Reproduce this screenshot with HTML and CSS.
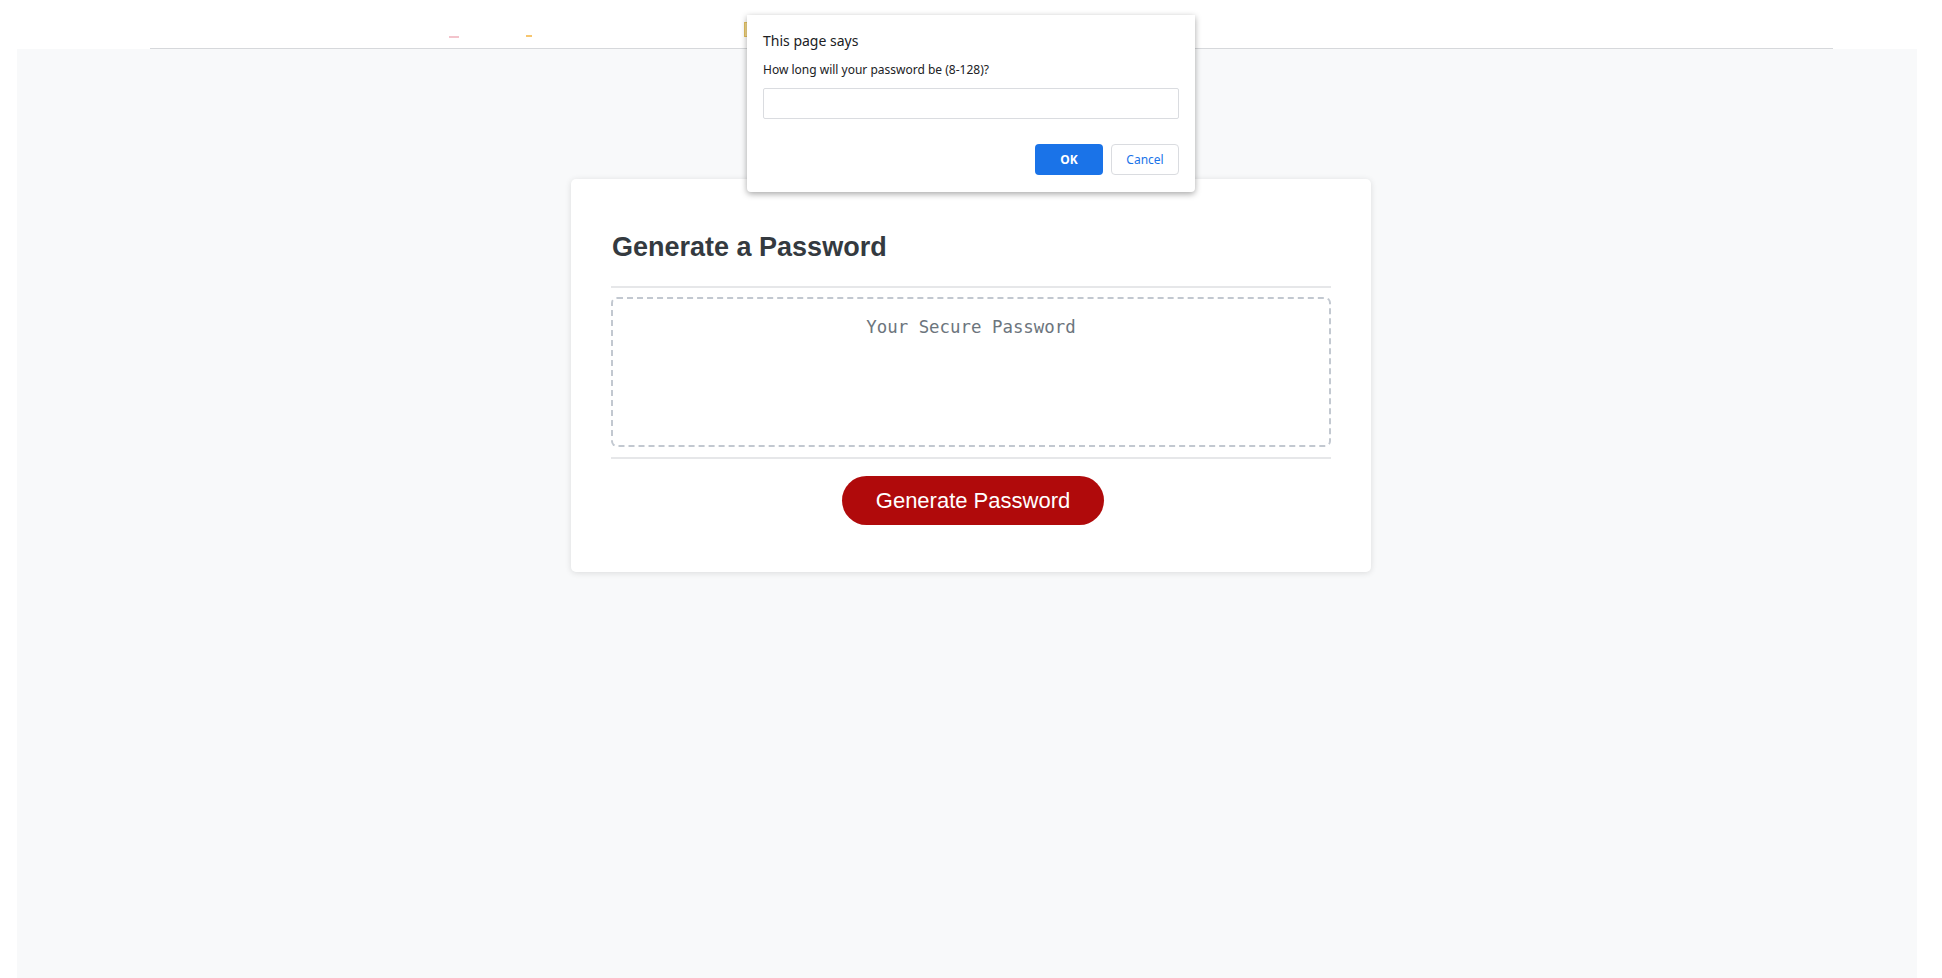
FILE: index.html
```html
<!DOCTYPE html>
<html lang="en">
<head>
    <meta charset="UTF-8">
    <meta name="viewport" content="width=device-width, initial-scale=1.0">
    <title>Password Generator</title>
    <link rel="stylesheet" href="styles.css">
</head>
<body>
    <header class="header">
        <span class="mark mark-pink"></span>
        <span class="mark mark-orange"></span>
        <span class="mark mark-yellow"></span>
    </header>
    <main class="wrapper">
        <div class="card">
            <h2 class="card-title">Generate a Password</h2>
            <hr class="divider">
            <textarea readonly id="password" class="password-box" placeholder="Your Secure Password"></textarea>
            <hr class="divider">
            <div class="card-footer">
                <button id="generate" class="btn">Generate Password</button>
            </div>
        </div>
    </main>

    <div class="dialog">
        <p class="dialog-title">This page says</p>
        <p class="dialog-message">How long will your password be (8-128)?</p>
        <input type="text" class="dialog-input">
        <div class="dialog-actions">
            <button class="dialog-btn dialog-ok">OK</button>
            <button class="dialog-btn dialog-cancel">Cancel</button>
        </div>
    </div>
</body>
</html>
```

FILE: styles.css
```css
body {
    font-family: Arial, "Liberation Sans", sans-serif;
    background-color: #fff;
    margin: 0;
    padding: 0;
    height: 978px;
    display: flex;
    flex-direction: column;
    overflow: hidden;
}

.header {
    height: 48px;
    margin: 0 109px 0 150px;
    border-bottom: 1px solid #d6d8db;
    display: flex;
    align-items: flex-end;
    flex-shrink: 0;
}

.mark {
    display: block;
    height: 2px;
    margin-bottom: 10px;
}

.mark-pink {
    width: 10px;
    margin-left: 299px;
    background: #f3c4cc;
}

.mark-orange {
    width: 6px;
    margin-left: 67px;
    margin-bottom: 11px;
    background: #f7c66f;
}

.mark-yellow {
    width: 4px;
    height: 13px;
    margin-left: 212px;
    margin-bottom: 11px;
    background: #f4d98c;
    border: 1px solid #e2c060;
}

.wrapper {
    flex: 1;
    margin: 0 25px 0 17px;
    padding: 130px 0 0 8px;
    background: #f8f9fa;
}

.card {
    width: 720px;
    margin: 0 auto;
    padding: 49px 40px 47px;
    background: white;
    border-radius: 5px;
    box-shadow: 0 1px 6px rgba(0, 0, 0, 0.12);
}

.card-title {
    margin: 3px 0 23px 1px;
    font-size: 27px;
    line-height: 32px;
    font-weight: bold;
    color: #343a40;
}

.divider {
    margin: 0;
    border: 0;
    border-top: 2px solid #e6e7e9;
}

.password-box {
    display: block;
    box-sizing: border-box;
    width: 100%;
    height: 150px;
    margin: 9px 0 10px;
    padding: 15px;
    border: 2px dashed #c2c8d0;
    border-radius: 6px;
    resize: none;
    outline: none;
    background: white;
    font-family: "DejaVu Sans Mono", monospace;
    font-size: 17.4px;
    line-height: 1.5;
    text-align: center;
    color: #555;
}

.password-box::placeholder {
    color: #6c757d;
}

.card-footer {
    display: flex;
    justify-content: center;
    padding: 17px 0 0 4px;
}

.btn {
    width: 262px;
    height: 49px;
    border: none;
    border-radius: 25px;
    background: #b00a0b;
    color: white;
    font-family: Arial, "Liberation Sans", sans-serif;
    font-size: 22px;
    cursor: pointer;
}

/* browser prompt on top of the page */
.dialog {
    position: absolute;
    left: 747px;
    top: 15px;
    width: 448px;
    height: 177px;
    box-sizing: border-box;
    padding: 0 16px;
    background: white;
    border-radius: 0 0 4px 4px;
    box-shadow: 0 2px 6px rgba(0, 0, 0, 0.35);
    font-family: "Noto Sans", "Open Sans", sans-serif;
    color: #202124;
}

.dialog-title {
    margin: 16px 0 0;
    font-size: 14px;
    line-height: 20px;
}

.dialog-message {
    margin: 10px 0 0;
    font-size: 12px;
    line-height: 18px;
}

.dialog-input {
    display: block;
    box-sizing: border-box;
    width: 100%;
    height: 31px;
    margin-top: 9px;
    border: 1px solid #dadce0;
    border-radius: 2px;
}

.dialog-actions {
    display: flex;
    justify-content: flex-end;
    gap: 8px;
    margin-top: 25px;
}

.dialog-btn {
    width: 68px;
    height: 31px;
    border-radius: 4px;
    font-family: "Noto Sans", "Open Sans", sans-serif;
    font-size: 12px;
}

.dialog-ok {
    border: none;
    background: #1a73e8;
    color: white;
    font-weight: bold;
}

.dialog-cancel {
    border: 1px solid #dadce0;
    background: white;
    color: #1a73e8;
}
```
